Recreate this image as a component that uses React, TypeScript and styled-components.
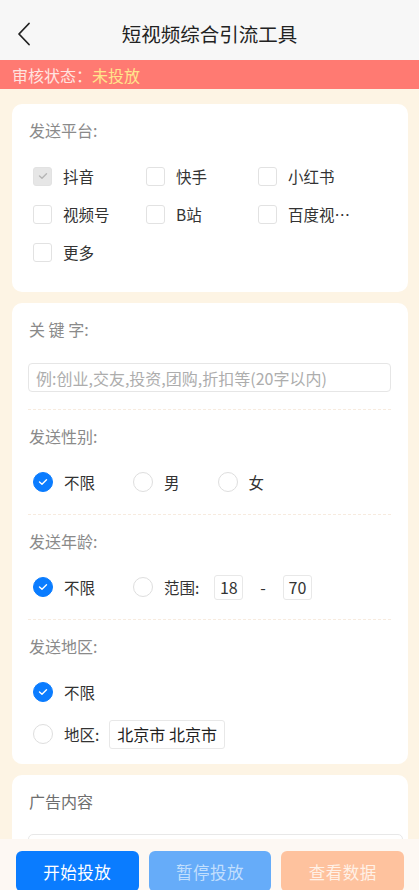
import React from 'react'
import styled, { createGlobalStyle } from 'styled-components'

//=> Global
const Global = createGlobalStyle`
	html, body {
		margin: 0;
		padding: 0;
		background: #fdf4e4;
		font-family: 'Noto Sans CJK SC', 'Noto Sans', sans-serif;
		color: #333;
	}
	* { box-sizing: border-box; }
`

const platforms = [
	{ name: '抖音', checked: true },
	{ name: '快手' },
	{ name: '小红书' },
	{ name: '视频号' },
	{ name: 'B站' },
	{ name: '百度视…' },
	{ name: '更多' }
]

const Check = () => (
	<svg width='10' height='8' viewBox='0 0 10 8'>
		<polyline
			points='1.5,4 4,6.3 8.5,1.8'
			fill='none'
			stroke='currentColor'
			strokeWidth='1.4'
			strokeLinecap='round'
			strokeLinejoin='round'
		/>
	</svg>
)

const RadioItem = ({ on, label }: { on?: boolean; label: string }) => (
	<Option>
		<Radio $on={on}>{on && <Check />}</Radio>
		<span>{label}</span>
	</Option>
)

//=> DOM
export default function App() {
	return (
		<Page>
			<Global />
			<Header>
				<Back>
					<svg width='14' height='24' viewBox='0 0 14 24'>
						<polyline
							points='12,1.5 2,12 12,22.5'
							fill='none'
							stroke='#222'
							strokeWidth='1.8'
							strokeLinecap='round'
							strokeLinejoin='round'
						/>
					</svg>
				</Back>
				<Title>短视频综合引流工具</Title>
			</Header>
			<Status>
				审核状态：<em>未投放</em>
			</Status>

			<Card>
				<Label>发送平台:</Label>
				<PlatformGrid>
					{platforms.map(p => (
						<Option key={p.name}>
							<Box>{p.checked && <Check />}</Box>
							<span>{p.name}</span>
						</Option>
					))}
				</PlatformGrid>
			</Card>

			<Card>
				<Label>关 键 字:</Label>
				<TextInput placeholder='例:创业,交友,投资,团购,折扣等(20字以内)' />
				<Divider />
				<Label>发送性别:</Label>
				<Row>
					<RadioItem on label='不限' />
					<RadioItem label='男' />
					<RadioItem label='女' />
				</Row>
				<Divider />
				<Label>发送年龄:</Label>
				<Row>
					<RadioItem on label='不限' />
					<Group $gap={15}>
						<RadioItem label='范围:' />
						<SmallBox>18</SmallBox>
						<Dash>-</Dash>
						<SmallBox>70</SmallBox>
					</Group>
				</Row>
				<Divider />
				<Label>发送地区:</Label>
				<Row>
					<RadioItem on label='不限' />
				</Row>
				<Row $tight>
					<Group $gap={10}>
						<RadioItem label='地区:' />
						<AreaBox>北京市 北京市</AreaBox>
					</Group>
				</Row>
			</Card>

			<Card>
				<Label $dark>广告内容</Label>
				<TextArea />
			</Card>

			<Footer>
				<Button $bg='#0a7cff' $fg='#fff'>
					开始投放
				</Button>
				<Button $bg='#66acf9' $fg='#c2dffd'>
					暂停投放
				</Button>
				<Button $bg='#fec29e' $fg='#fff1e7'>
					查看数据
				</Button>
			</Footer>
		</Page>
	)
}

//=> Style
const Page = styled.div`
	width: 419px;
	min-height: 890px;
	padding-bottom: 60px;
`

const Header = styled.header`
	height: 60px;
	background: #f7f7f7;
	display: flex;
	align-items: center;
	justify-content: center;
	position: relative;
	padding-top: 6px;
`

const Back = styled.div`
	position: absolute;
	left: 17px;
	top: 22px;
	display: flex;
`

const Title = styled.h1`
	margin: 0;
	font-size: 19.5px;
	font-weight: 400;
	color: #222;
`

const Status = styled.div`
	height: 29px;
	background: #ff7a72;
	color: #ffe4e0;
	font-size: 16px;
	display: flex;
	align-items: center;
	padding-left: 12px;
	em {
		font-style: normal;
		color: #ffe58c;
	}
`

const Card = styled.section`
	margin: 15px 11px 0 12px;
	background: #fff;
	border-radius: 10px;
	padding: 15px 17px 15px 16px;
	& + & {
		margin-top: 11px;
	}
`

const Label = styled.div<{ $dark?: boolean }>`
	font-size: 16px;
	line-height: 22px;
	color: ${p => (p.$dark ? '#6e6e6e' : '#8a8a8a')};
	padding-left: 1px;
`

const PlatformGrid = styled.div`
	display: grid;
	grid-template-columns: 113px 112px 1fr;
	grid-auto-rows: 38px;
	margin-top: 16px;
	padding-left: 5px;
	padding-bottom: 6px;
`

const Option = styled.label`
	display: flex;
	align-items: center;
	gap: 11px;
	font-size: 15.5px;
	color: #333;
	white-space: nowrap;
`

const Box = styled.span`
	width: 19px;
	height: 19px;
	border-radius: 3px;
	border: 1px solid #e2e2e2;
	background: #fff;
	color: #b5b5b5;
	display: flex;
	align-items: center;
	justify-content: center;
	&:has(svg) {
		background: #e6e6e6;
	}
`

const Radio = styled.span<{ $on?: boolean }>`
	width: 20px;
	height: 20px;
	border-radius: 50%;
	border: 1px solid ${p => (p.$on ? '#0a7cff' : '#dedede')};
	background: ${p => (p.$on ? '#0a7cff' : '#fff')};
	color: #fff;
	display: flex;
	align-items: center;
	justify-content: center;
`

const TextInput = styled.input`
	display: block;
	width: 363px;
	height: 29px;
	margin: 23px 0 2px;
	border: 1px solid #e6e6e6;
	border-radius: 4px;
	padding: 0 7px;
	font-family: inherit;
	font-size: 16px;
	color: #333;
	outline: none;
	&::placeholder {
		color: #adadad;
	}
`

const Divider = styled.div`
	border-top: 1px dashed #f7ebdf;
	margin: 17px 0 15px;
	width: 363px;
`

const Row = styled.div<{ $tight?: boolean }>`
	display: flex;
	align-items: center;
	height: 30px;
	margin-top: ${p => (p.$tight ? '12px' : '20px')};
	padding-left: 5px;
	gap: 38px;
`

const Group = styled.div<{ $gap: number }>`
	display: flex;
	align-items: center;
	gap: ${p => p.$gap}px;
`

const SmallBox = styled.span`
	height: 25px;
	min-width: 29px;
	padding: 0 3px;
	border: 1px solid #e8e8e8;
	border-radius: 3px;
	font-size: 16px;
	display: flex;
	align-items: center;
	justify-content: center;
`

const Dash = styled.span`
	font-size: 16px;
	padding: 0 2px;
`

const AreaBox = styled.span`
	height: 29px;
	padding: 0 7px;
	border: 1px solid #e8e8e8;
	border-radius: 3px;
	font-size: 16px;
	color: #222;
	display: flex;
	align-items: center;
`

const TextArea = styled.div`
	margin: 22px -12px 0 0;
	height: 90px;
	border: 1px solid #e8e8e8;
	border-radius: 5px;
`

const Footer = styled.footer`
	position: fixed;
	left: 0;
	right: 0;
	bottom: 0;
	height: 51px;
	background: #fdf8f3;
	display: grid;
	grid-template-columns: repeat(3, 1fr);
	gap: 10px;
	padding: 12px 15px 0 16px;
	align-items: start;
`

const Button = styled.button<{ $bg: string; $fg: string }>`
	height: 41px;
	border: none;
	border-radius: 6px;
	background: ${p => p.$bg};
	color: ${p => p.$fg};
	font-family: inherit;
	font-size: 16.5px;
	letter-spacing: 0.5px;
`
